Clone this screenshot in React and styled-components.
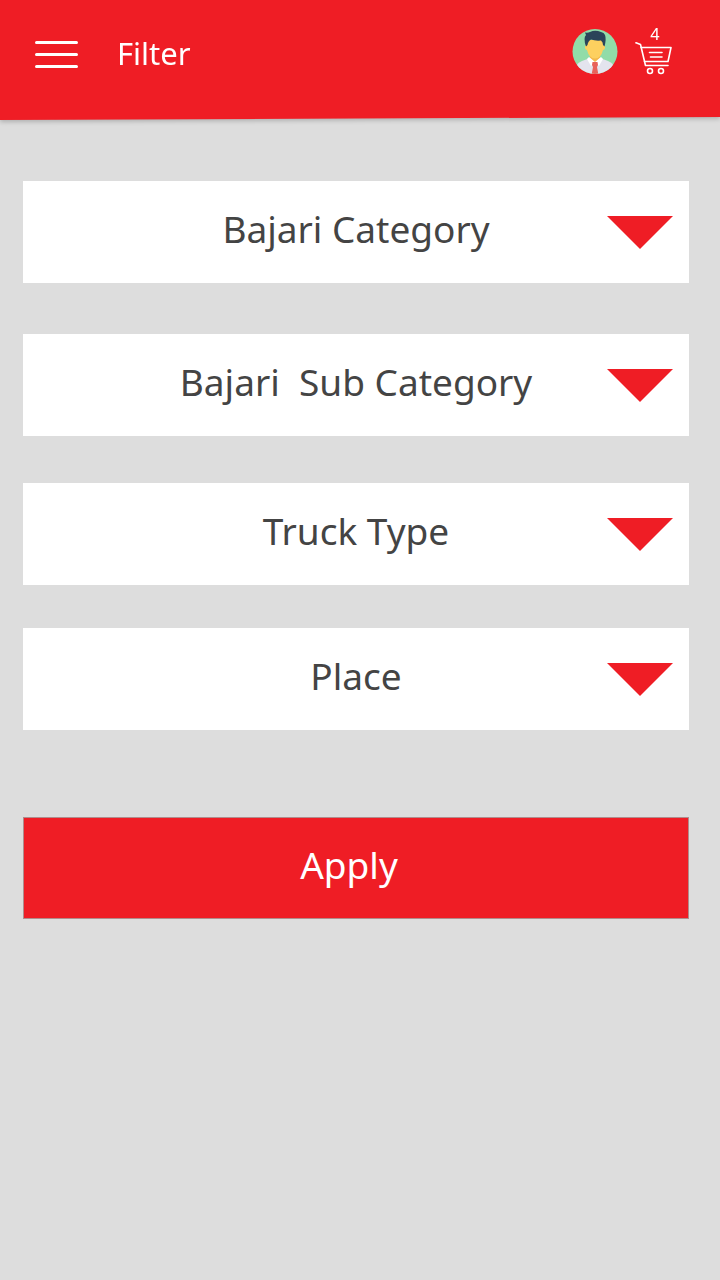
import React, { useState } from "react";
import styled, { createGlobalStyle, ThemeProvider } from "styled-components";

const theme = {
    primary: "#ef1d25",
    bg: "#dddddd",
    card: "#ffffff",
    text: "#444444",
};

const GlobalStyle = createGlobalStyle`
* { box-sizing: border-box; }
body {
    margin: 0;
    background: ${theme.bg};
    font-family: "Noto Sans", "Open Sans", sans-serif;
}
`;

const Page = styled.div`
min-height: 100vh;
background: ${({ theme }) => theme.bg};
`;

const HeaderShadow = styled.div`
filter: drop-shadow(0 2px 2px rgba(0, 0, 0, 0.2));
`;

const Header = styled.header`
display: flex;
align-items: flex-start;
height: 120px;
padding: 28px 47px 0 34px;
color: white;
background: ${({ theme }) => theme.primary};
clip-path: polygon(0 0, 100% 0, 100% 117px, 0 120px);
`;

const IconButton = styled.button`
display: flex;
padding: 0;
border: none;
background: none;
color: inherit;
cursor: pointer;
`;

const MenuButton = styled(IconButton)`
margin-top: 10px;
`;

const Title = styled.h1`
margin: 0 auto 0 38px;
font-size: 31px;
font-weight: 400;
line-height: 50px;
`;

const CartButton = styled(IconButton)`
flex-direction: column;
align-items: center;
margin-left: 17px;
`;

const CartCount = styled.span`
padding-left: 2px;
font-size: 17px;
font-weight: 500;
line-height: 14px;
`;

const Form = styled.form`
display: flex;
flex-direction: column;
padding: 61px 31px 40px 23px;
`;

const Field = styled.div`
display: grid;
align-items: center;
margin-bottom: ${({ $gap }) => $gap}px;
background: ${({ theme }) => theme.card};
`;

const Select = styled.select`
grid-area: 1 / 1;
width: 100%;
height: 102px;
padding: 0 80px 8px;
border: none;
border-radius: 0;
appearance: none;
background: transparent;
color: ${({ theme }) => theme.text};
font-family: inherit;
font-size: 37px;
text-align: center;
text-align-last: center;
cursor: pointer;
`;

const Arrow = styled.svg`
grid-area: 1 / 1;
justify-self: end;
margin-right: 16px;
width: 66px;
height: 33px;
fill: ${({ theme }) => theme.primary};
pointer-events: none;
`;

const ApplyButton = styled.button`
height: 102px;
padding: 0 14px 8px 0;
border: 1px solid #b08c8c;
background: ${({ theme }) => theme.primary};
color: white;
font-family: inherit;
font-size: 37px;
cursor: pointer;
`;

const fields = [
    { id: "category", label: "Bajari Category", gap: 51 },
    { id: "subCategory", label: "Bajari \u00a0Sub Category", gap: 47 },
    { id: "truckType", label: "Truck Type", gap: 43 },
    { id: "place", label: "Place", gap: 87 },
];

const MenuIcon = () => (
    <svg width="45" height="32" viewBox="0 0 45 32" stroke="currentColor" strokeWidth="3" strokeLinecap="round">
        <path d="M2.5 4.5H42.5M2.5 16.5H42.5M2.5 28.5H42.5" />
    </svg>
);

const Avatar = () => (
    <svg width="46" height="47" viewBox="0 0 46 47">
        <defs>
            <clipPath id="face">
                <circle cx="23" cy="23.5" r="22.5" />
            </clipPath>
        </defs>
        <g clipPath="url(#face)">
            <rect width="46" height="47" fill="#91dca8" />
            <path d="M4 47V39Q5 35 10 33L18 30H28L36 33Q41 35 42 39V47Z" fill="#e4e4ee" />
            <path d="M18 24H28V30L23 35L18 30Z" fill="#f3b94d" />
            <path d="M17 29L23 34L19 38L15 31Z" fill="#ffffff" />
            <path d="M29 29L23 34L27 38L31 31Z" fill="#ffffff" />
            <path d="M20.500 34H25.500L26 37L25 39L26.500 47H19.500L21 39L20 37Z" fill="#e8625a" />
            <path d="M15 12H31V17Q33.500 17 33 20Q32.500 22 31 22Q29 30.500 23 30.500Q17 30.500 15 22Q13.500 22 13 20Q12.500 17 15 17Z" fill="#fdd05f" />
            <path d="M14 18.500Q11 10 14 7L13 4.500Q16 5 18 4Q23 1.500 29 4Q32 4.500 33 7Q34.500 11 32.500 18.500L31 17Q31 14 29 12.500Q23 13 19 11.500Q16 13 15.500 17Z" fill="#2b4459" />
        </g>
    </svg>
);

const CartIcon = () => (
    <svg width="38" height="33" viewBox="0 0 38 33" fill="none" stroke="currentColor" strokeWidth="1.600" strokeLinecap="round" strokeLinejoin="round">
        <path d="M1 0.800L5.500 2.500L10.500 23.500H33" />
        <path d="M6 5.500H36L33 19.500H9.500" />
        <path d="M14.500 10.500H27M15.500 15H27" />
        <circle cx="15" cy="29" r="2.500" />
        <circle cx="26" cy="29" r="2.500" />
    </svg>
);

const FilterField = ({ field }) => {
    const [value, setValue] = useState("");

    return (
        <Field $gap={field.gap}>
            <Select id={field.id} aria-label={field.label} value={value} onChange={(e) => setValue(e.target.value)}>
                <option value="">{field.label}</option>
            </Select>
            <Arrow viewBox="0 0 66 33" aria-hidden="true">
                <path d="M0 0H66L33 33Z" />
            </Arrow>
        </Field>
    );
};

const App = () => {
    return (
        <ThemeProvider theme={theme}>
            <GlobalStyle />
            <Page>
                <HeaderShadow>
                    <Header>
                        <MenuButton type="button" aria-label="Menu">
                            <MenuIcon />
                        </MenuButton>
                        <Title>Filter</Title>
                        <IconButton type="button" aria-label="Profile">
                            <Avatar />
                        </IconButton>
                        <CartButton type="button" aria-label="Cart">
                            <CartCount>4</CartCount>
                            <CartIcon />
                        </CartButton>
                    </Header>
                </HeaderShadow>
                <Form onSubmit={(e) => e.preventDefault()}>
                    {fields.map((field) => (
                        <FilterField key={field.id} field={field} />
                    ))}
                    <ApplyButton type="submit">Apply</ApplyButton>
                </Form>
            </Page>
        </ThemeProvider>
    );
};

export default App;
